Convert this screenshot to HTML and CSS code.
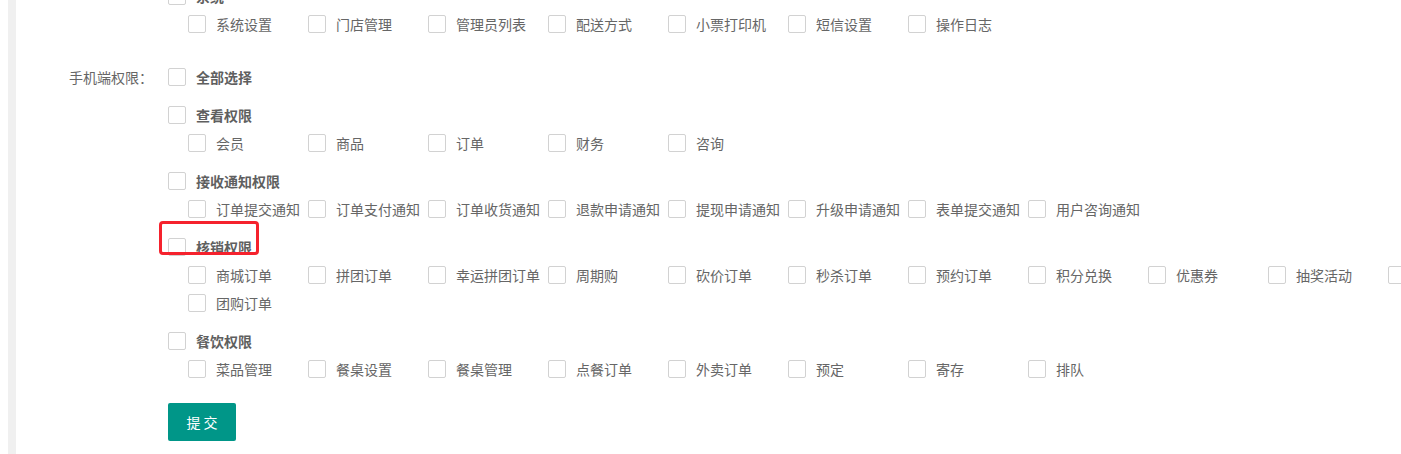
FILE: index.html
```html
<html>
    <head>
        <title>角色权限</title>
        <link rel="stylesheet" href="styles.css">
    </head>
    <body>
        <div class="page">
            <div class="side-line"></div>
            <div class="main">
                <form class="form">
                    <div class="form-item">
                        <div class="form-label"></div>
                        <div class="form-block">
                            <div class="group">
                                <label class="check head"><i></i><span>系统</span></label>
                                <div class="check-list">
                                    <label class="check"><i></i><span>系统设置</span></label>
                                    <label class="check"><i></i><span>门店管理</span></label>
                                    <label class="check"><i></i><span>管理员列表</span></label>
                                    <label class="check"><i></i><span>配送方式</span></label>
                                    <label class="check"><i></i><span>小票打印机</span></label>
                                    <label class="check"><i></i><span>短信设置</span></label>
                                    <label class="check"><i></i><span>操作日志</span></label>
                                </div>
                            </div>
                        </div>
                    </div>

                    <div class="form-item">
                        <div class="form-label">手机端权限：</div>
                        <div class="form-block">
                            <div class="group">
                                <label class="check head"><i></i><span>全部选择</span></label>
                            </div>

                            <div class="group">
                                <label class="check head"><i></i><span>查看权限</span></label>
                                <div class="check-list">
                                    <label class="check"><i></i><span>会员</span></label>
                                    <label class="check"><i></i><span>商品</span></label>
                                    <label class="check"><i></i><span>订单</span></label>
                                    <label class="check"><i></i><span>财务</span></label>
                                    <label class="check"><i></i><span>咨询</span></label>
                                </div>
                            </div>

                            <div class="group">
                                <label class="check head"><i></i><span>接收通知权限</span></label>
                                <div class="check-list">
                                    <label class="check"><i></i><span>订单提交通知</span></label>
                                    <label class="check"><i></i><span>订单支付通知</span></label>
                                    <label class="check"><i></i><span>订单收货通知</span></label>
                                    <label class="check"><i></i><span>退款申请通知</span></label>
                                    <label class="check"><i></i><span>提现申请通知</span></label>
                                    <label class="check"><i></i><span>升级申请通知</span></label>
                                    <label class="check"><i></i><span>表单提交通知</span></label>
                                    <label class="check"><i></i><span>用户咨询通知</span></label>
                                </div>
                            </div>

                            <div class="group">
                                <label class="check head marked"><i></i><span>核销权限</span><b class="mark"></b></label>
                                <div class="check-list">
                                    <label class="check"><i></i><span>商城订单</span></label>
                                    <label class="check"><i></i><span>拼团订单</span></label>
                                    <label class="check"><i></i><span>幸运拼团订单</span></label>
                                    <label class="check"><i></i><span>周期购</span></label>
                                    <label class="check"><i></i><span>砍价订单</span></label>
                                    <label class="check"><i></i><span>秒杀订单</span></label>
                                    <label class="check"><i></i><span>预约订单</span></label>
                                    <label class="check"><i></i><span>积分兑换</span></label>
                                    <label class="check"><i></i><span>优惠券</span></label>
                                    <label class="check"><i></i><span>抽奖活动</span></label>
                                    <label class="check"><i></i><span>礼品卡</span></label>
                                    <label class="check"><i></i><span>团购订单</span></label>
                                </div>
                            </div>

                            <div class="group">
                                <label class="check head"><i></i><span>餐饮权限</span></label>
                                <div class="check-list">
                                    <label class="check"><i></i><span>菜品管理</span></label>
                                    <label class="check"><i></i><span>餐桌设置</span></label>
                                    <label class="check"><i></i><span>餐桌管理</span></label>
                                    <label class="check"><i></i><span>点餐订单</span></label>
                                    <label class="check"><i></i><span>外卖订单</span></label>
                                    <label class="check"><i></i><span>预定</span></label>
                                    <label class="check"><i></i><span>寄存</span></label>
                                    <label class="check"><i></i><span>排队</span></label>
                                </div>
                            </div>

                            <button type="button" class="btn">提 交</button>
                        </div>
                    </div>
                </form>
            </div>
        </div>
    </body>
</html>
```

FILE: styles.css
```css
html, body {
    margin: 0;
    height: 100%;
    overflow: hidden;
    background: #fff;
    font-family: "Noto Sans CJK SC", "Noto Sans", sans-serif;
    font-size: 14px;
    color: #666;
}

.page {
    display: flex;
    height: 100%;
    padding-left: 8px;
}

.side-line {
    width: 8px;
    flex: none;
    background: #f0f0f0;
}

.main {
    flex: 1;
    padding-left: 42px;
}

.form {
    margin: -18px 0 0 0;
}

.form-item {
    display: flex;
    margin-bottom: 15px;
}

.form-label {
    width: 95px;
    padding-right: 15px;
    flex: none;
    text-align: right;
    line-height: 28px;
    white-space: nowrap;
}

.form-block {
    flex: none;
}

.group {
    margin-bottom: 10px;
}

.check {
    display: flex;
    align-items: center;
    gap: 10px;
    height: 28px;
    white-space: nowrap;
    cursor: pointer;
}

.check i {
    width: 16px;
    height: 16px;
    flex: none;
    border: 1px solid #d2d2d2;
    border-radius: 2px;
    background: #fff;
}

.check.head span {
    font-weight: bold;
    color: #5f5f5f;
}

.check-list {
    display: flex;
    flex-wrap: wrap;
    width: 1320px;
    padding-left: 20px;
}

.check-list .check {
    width: 120px;
}

.check.marked {
    position: relative;
    width: 80px;
}

.mark {
    position: absolute;
    left: -9px;
    top: -12px;
    width: 94px;
    height: 28px;
    border: 3px solid #f5222d;
    border-radius: 4px;
}

.btn {
    margin-top: 10px;
    width: 68px;
    height: 38px;
    padding: 0;
    border: none;
    border-radius: 2px;
    background: #009688;
    color: #fff;
    font-family: inherit;
    font-size: 14px;
    cursor: pointer;
}
```
